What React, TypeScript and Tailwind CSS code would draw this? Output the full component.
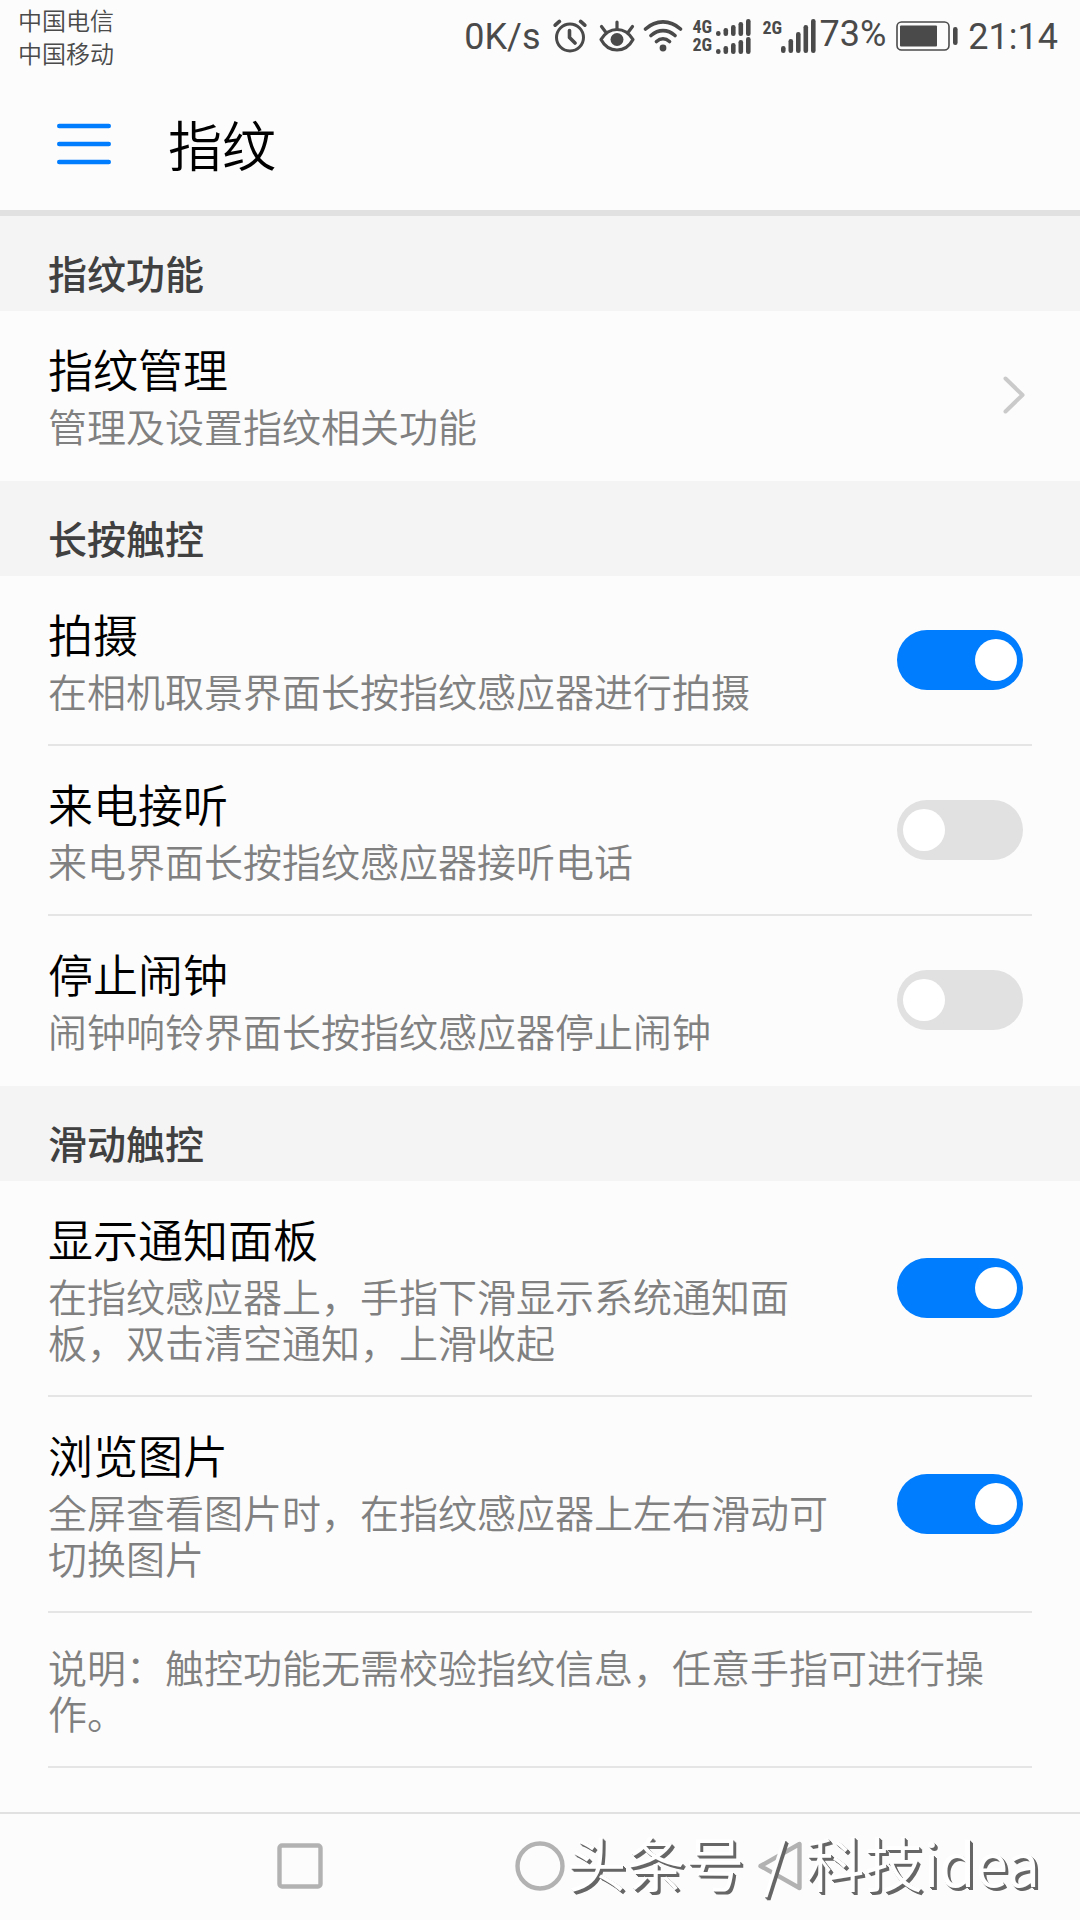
import React, { useState } from 'react';

type Item = {
  id: string;
  title: string;
  desc: string;
  on?: boolean;
  link?: boolean;
};

const sections: { title: string; items: Item[] }[] = [
  {
    title: '指纹功能',
    items: [{ id: 'manage', title: '指纹管理', desc: '管理及设置指纹相关功能', link: true }],
  },
  {
    title: '长按触控',
    items: [
      { id: 'shoot', title: '拍摄', desc: '在相机取景界面长按指纹感应器进行拍摄', on: true },
      { id: 'answer', title: '来电接听', desc: '来电界面长按指纹感应器接听电话', on: false },
      { id: 'alarm', title: '停止闹钟', desc: '闹钟响铃界面长按指纹感应器停止闹钟', on: false },
    ],
  },
  {
    title: '滑动触控',
    items: [
      {
        id: 'panel',
        title: '显示通知面板',
        desc: '在指纹感应器上，手指下滑显示系统通知面板，双击清空通知，上滑收起',
        on: true,
      },
      {
        id: 'browse',
        title: '浏览图片',
        desc: '全屏查看图片时，在指纹感应器上左右滑动可切换图片',
        on: true,
      },
    ],
  },
];

const SignalBars: React.FC<{ heights: number[]; className: string; height: number }> = ({ heights, className, height }) => (
  <svg className={className} viewBox={`0 0 35 ${height}`} fill="currentColor" aria-hidden="true">
    {heights.map((h, i) => (
      <rect key={i} x={i * 7.5} y={height - h} width="4.6" height={h} rx="2.2" />
    ))}
  </svg>
);

const StatusBar: React.FC = () => (
  <div className="flex h-[72px] items-start justify-between pl-[18px] pr-[22px] text-[#4a4a4a]">
    <div className="pt-[3px] text-[24px] leading-[33px]">
      <p>中国电信</p>
      <p>中国移动</p>
    </div>
    <div className="flex h-[72px] items-center font-[Roboto] text-[36px] font-normal leading-[72px]">
      <span className="pt-[2px]">0K/s</span>
      {/* Alarm */}
      <svg className="ml-3 h-[34px] w-[34px]" viewBox="0 0 34 34" fill="none" stroke="currentColor" strokeWidth="3" strokeLinecap="round" strokeLinejoin="round" aria-hidden="true">
        <circle cx="17" cy="18.5" r="13.5" />
        <path d="M16.5 11.5v7l5.5 5.5M2.2 6.2l4.2-3.8M31.8 6.2l-4.2-3.8" strokeWidth="3.6" />
      </svg>
      {/* Eye comfort */}
      <svg className="ml-3 h-[34px] w-[36px]" viewBox="0 0 36 34" fill="none" stroke="currentColor" strokeWidth="3.2" strokeLinecap="round" strokeLinejoin="round" aria-hidden="true">
        <path d="M2 20.500C6 14 11.500 10.500 18 10.500S30 14 34 20.500C30 28 24.500 31 18 31S6 28 2 20.500zM18 3v7M2.500 7.500l4.500 6M33.500 7.500l-4.500 6" />
        <circle cx="18" cy="20.500" r="6.500" fill="currentColor" stroke="none" />
      </svg>
      {/* Wi-Fi */}
      <svg className="ml-2 h-[34px] w-[40px]" viewBox="0 0 40 34" fill="none" stroke="currentColor" strokeWidth="3.6" strokeLinecap="round" aria-hidden="true">
        <path d="M2.500 10C13 .5 27 .5 37.500 10M8 16.500c7.500-6.500 16.500-6.500 24 0M13.500 22.500c4-3.500 9-3.500 13 0" />
        <circle cx="20" cy="29" r="3.400" fill="currentColor" stroke="none" />
      </svg>
      <div className="ml-[10px] font-['Liberation_Sans_Narrow','Roboto_Condensed','Roboto',sans-serif] text-[18px] font-bold leading-[18px]">
        <div className="flex items-center gap-1">
          <span className="w-[19px]">4G</span>
          <SignalBars className="h-[17px] w-[35px]" height={17} heights={[5, 8, 11, 14, 17]} />
        </div>
        <div className="flex items-center gap-1">
          <span className="w-[19px]">2G</span>
          <SignalBars className="h-[17px] w-[35px]" height={17} heights={[5, 8, 11, 14, 17]} />
        </div>
      </div>
      <div className="ml-3 flex items-start font-['Liberation_Sans_Narrow','Roboto_Condensed','Roboto',sans-serif] text-[18px] font-bold leading-[18px]">
        <span className="w-[18px]">2G</span>
        <SignalBars className="h-[34px] w-[35px]" height={34} heights={[7, 14, 21, 28, 34]} />
      </div>
      <span className="ml-1 pb-1">73%</span>
      {/* Battery */}
      <svg className="ml-[10px] h-[30px] w-[62px]" viewBox="0 0 62 30" fill="currentColor" aria-hidden="true">
        <rect x="1" y="1" width="52" height="28" rx="4.500" fill="none" stroke="currentColor" strokeWidth="1.600" />
        <rect x="4" y="4.500" width="37" height="21" rx="1" />
        <rect x="57" y="6" width="4.600" height="18" rx="2.200" />
      </svg>
      <span className="ml-[10px] pt-[2px]">21:14</span>
    </div>
  </div>
);

const SettingRow: React.FC<{ item: Item; last: boolean }> = ({ item, last }) => {
  const [on, setOn] = useState(!!item.on);
  const border = last ? 'border-transparent' : 'border-[#e5e5e5]';
  const text = (
    <span className="flex-1 pt-[25px] pb-[31px]">
      <span className="block text-[45px] leading-[66px] text-black">{item.title}</span>
      <span className="block text-[39px] leading-[46px] text-[#808080]">{item.desc}</span>
    </span>
  );

  if (item.link) {
    return (
      <a href="#manage" className={`flex items-center gap-9 border-b-2 pr-[7px] ${border}`}>
        {text}
        <svg className="h-[38px] w-[22px]" viewBox="0 0 22 38" fill="none" stroke="#cacaca" strokeWidth="4" strokeLinecap="round" strokeLinejoin="round" aria-hidden="true">
          <path d="M2.500 2.500L19.500 19l-17 16.500" />
        </svg>
      </a>
    );
  }

  return (
    <label htmlFor={item.id} className={`flex items-center gap-9 border-b-2 pr-[9px] ${border}`}>
      {text}
      <input
        id={item.id}
        type="checkbox"
        role="switch"
        checked={on}
        onChange={() => setOn(!on)}
        className="flex h-[60px] w-[126px] shrink-0 appearance-none items-center rounded-full bg-[#e1e1e1] px-[6px] before:size-[42px] before:rounded-full before:bg-white before:content-[''] checked:justify-end checked:bg-[#007dff]"
      />
    </label>
  );
};

const NavBar: React.FC = () => (
  <nav className="relative border-t-2 border-[#e1e1e1]">
    <div className="mx-auto grid h-[106px] w-2/3 grid-cols-3 place-items-center pb-[2px]">
      <button type="button" aria-label="最近任务">
        <svg className="size-[50px]" viewBox="0 0 50 50" fill="none" stroke="#b2b2b2" strokeWidth="4.400" aria-hidden="true">
          <rect x="4.500" y="4.500" width="41" height="41" rx="2.500" />
        </svg>
      </button>
      <button type="button" aria-label="主屏幕">
        <svg className="size-[50px]" viewBox="0 0 50 50" fill="none" stroke="#b2b2b2" strokeWidth="4.400" aria-hidden="true">
          <circle cx="25" cy="25" r="22.500" />
        </svg>
      </button>
      <button type="button" aria-label="返回">
        <svg className="size-[50px]" viewBox="0 0 50 50" fill="none" stroke="#b2b2b2" strokeWidth="4.400" strokeLinejoin="round" aria-hidden="true">
          <path d="M44.500 3v44L5.500 25z" />
        </svg>
      </button>
    </div>
    <p className="pointer-events-none absolute inset-y-0 right-10 flex items-center gap-[19px] pb-3 text-[59px] leading-none text-white [text-shadow:1px_1px_0_#666,2px_2px_0_#666,3px_3px_0_#666]">
      <span>头条号</span>
      <span>/</span>
      <span>科技idea</span>
    </p>
  </nav>
);

const App: React.FC = () => {
  return (
    <div className="flex min-h-screen flex-col bg-[#fcfcfc] font-['Noto_Sans_CJK_SC',sans-serif] font-[350]" lang="zh-CN">
      <StatusBar />
      <header className="flex h-36 items-center gap-[57px] border-b-[6px] border-[#e1e1e1] pl-[57px] pt-[6px]">
        <button type="button" aria-label="菜单">
          <svg className="h-[42px] w-[54px]" viewBox="0 0 54 42" stroke="#007dff" strokeWidth="4.400" strokeLinecap="round" aria-hidden="true">
            <path d="M2.200 3h49.600M2.200 21h49.600M2.200 39h49.600" />
          </svg>
        </button>
        <h1 className="text-[54px] leading-[66px] text-black">指纹</h1>
      </header>

      <main className="flex-1">
        {sections.map((section, s) => (
          <section key={section.title}>
            <h2 className="bg-[#f4f4f4] px-12 pt-9 pb-[19px] text-[39px] font-medium leading-[40px] text-[#404040]">
              {section.title}
            </h2>
            <div className="px-12">
              {section.items.map((item, i) => (
                <SettingRow
                  key={item.id}
                  item={item}
                  last={s < sections.length - 1 && i === section.items.length - 1}
                />
              ))}
            </div>
          </section>
        ))}
        <div className="px-12">
          <p className="border-b-2 border-[#e5e5e5] pt-[30px] pb-[31px] text-[39px] leading-[46px] text-[#808080]">
            说明：触控功能无需校验指纹信息，任意手指可进行操作。
          </p>
        </div>
      </main>

      <NavBar />
    </div>
  );
};

export default App;
